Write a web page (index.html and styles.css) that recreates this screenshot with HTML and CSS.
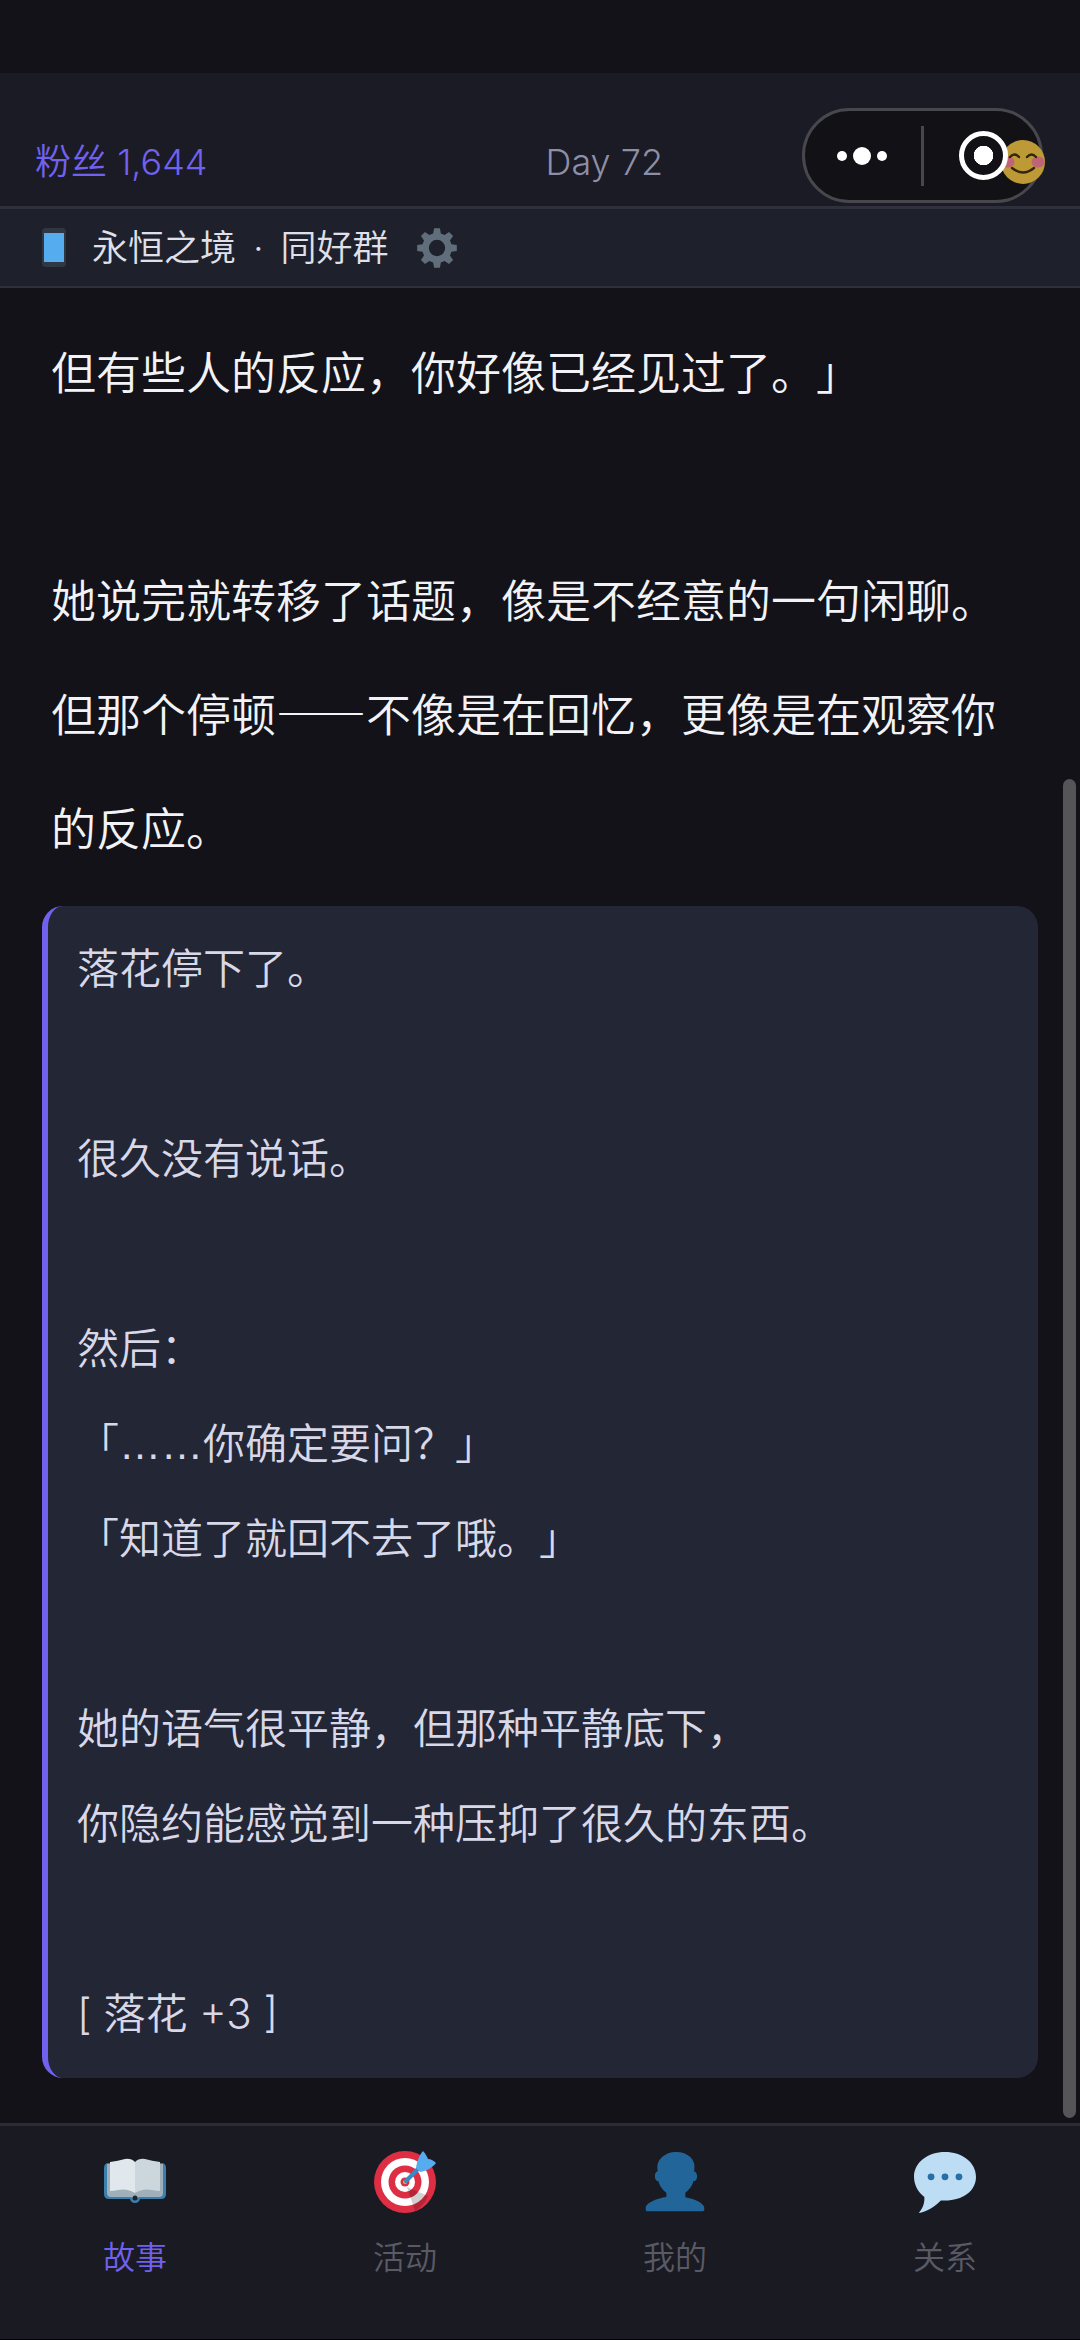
FILE: index.html
```html
<!DOCTYPE html>
<html lang="zh-CN">
<head>
<meta charset="utf-8">
<title>永恒之境</title>
<link rel="stylesheet" href="styles.css">
</head>
<body>
<div class="page">
  <div class="status"></div>
  <header class="top">
    <span class="fans">粉丝 1,644</span>
    <span class="day">Day 72</span>
    <svg class="smiley" viewBox="0 0 44 44" width="44" height="44">
      <circle cx="22" cy="22" r="22" fill="#bd9a35"/>
      <ellipse cx="7" cy="22" rx="6.500" ry="5.500" fill="#bf6477"/>
      <ellipse cx="37" cy="22" rx="6.500" ry="5.500" fill="#bf6477"/>
      <path d="M9 17q4.500-5 9 0M26 17q4.500-5 9 0M11 28q11 9 22 0" fill="none" stroke="#33260e" stroke-width="2.400" stroke-linecap="round"/>
    </svg>
  </header>
  <div class="sub">
    <svg class="phone" viewBox="0 0 24 39" width="24" height="39">
      <rect width="24" height="39" rx="4" fill="#2f3742"/>
      <rect x="2" y="5" width="20" height="29" fill="#55acee"/>
    </svg>
    <span class="sub-title">永恒之境 · 同好群</span>
    <svg class="gear" viewBox="0 0 36 36" width="42" height="42">
      <path fill="#5f6e7a" fill-rule="evenodd" d="M15.500 1h5l.8 4.600 3.200 1.300 3.800-2.700 3.500 3.500-2.700 3.800 1.300 3.200 4.600.8v5l-4.600.8-1.300 3.200 2.700 3.800-3.500 3.500-3.800-2.700-3.200 1.300-.8 4.600h-5l-.8-4.600-3.200-1.300-3.800 2.700-3.500-3.500 2.700-3.800-1.300-3.200L1 20.500v-5l4.600-.8 1.300-3.200-2.700-3.800 3.500-3.500 3.800 2.700 3.200-1.300zM18 11a7 7 0 1 0 0 14 7 7 0 0 0 0-14z"/>
    </svg>
  </div>
  <main class="content">
    <p class="line">但有些人的反应，你好像已经见过了。」</p>
    <p class="line">&nbsp;</p>
    <p class="line">她说完就转移了话题，像是不经意的一句闲聊。</p>
    <p class="line">但那个停顿<span class="cjk">——</span>不像是在回忆，更像是在观察你</p>
    <p class="line">的反应。</p>
    <section class="card">
      <p>落花停下了。</p>
      <p>&nbsp;</p>
      <p>很久没有说话。</p>
      <p>&nbsp;</p>
      <p>然后：</p>
      <p>「<span class="low">……</span>你确定要问？」</p>
      <p>「知道了就回不去了哦。」</p>
      <p>&nbsp;</p>
      <p>她的语气很平静，但那种平静底下，</p>
      <p>你隐约能感觉到一种压抑了很久的东西。</p>
      <p>&nbsp;</p>
      <p>[ 落花 +3 ]</p>
    </section>
  </main>
  <nav class="tabs">
    <div class="tab active">
      <svg class="tab-icon" viewBox="0 0 62 62" width="62" height="62">
        <path fill="#3b7fad" d="M5 12h52q5 0 5 5v26q0 5-5 5H36q-1 4-5 4t-5-4H5q-5 0-5-5V17q0-5 5-5z"/>
        <path fill="#9fb0ba" d="M3 13h56v29q0 4-4 4H35l-4 2-4-2H7q-4 0-4-4z"/>
        <path fill="#e1e8ed" d="M6 11q8-1 15-3 6-1 10 3v31q-8-5-17-3-4 1-8 1z"/>
        <path fill="#ccd6dd" d="M56 11q-8-1-15-3-6-1-10 3v31q8-5 17-3 4 1 8 1z"/>
        <circle cx="31" cy="47" r="2.500" fill="#1c2530"/>
      </svg>
      <span class="tab-label">故事</span>
    </div>
    <div class="tab">
      <svg class="tab-icon" viewBox="0 0 62 62" width="62" height="62">
        <circle cx="31" cy="31" r="31" fill="#dd2e44"/>
        <circle cx="31" cy="31" r="24" fill="#fff"/>
        <circle cx="31" cy="31" r="16.500" fill="#dd2e44"/>
        <circle cx="31" cy="31" r="10" fill="#fff"/>
        <circle cx="31" cy="31" r="4.500" fill="#dd2e44"/>
        <circle cx="31" cy="31" r="2" fill="#ffac33"/>
        <path fill="#000" opacity=".18" d="M33 36l21 9a31 31 0 0 1-13 15z"/>
        <path stroke="#3b88c3" stroke-width="4" stroke-linecap="round" d="M32 30L48 14"/>
        <path fill="#55acee" d="M42 17C43 10 46 3 49 0c3 3 4 6 5 8 3 0 6 2 8 4-3 4-9 8-16 9z"/>
      </svg>
      <span class="tab-label">活动</span>
    </div>
    <div class="tab">
      <svg class="tab-icon" viewBox="0 0 36 36" width="62" height="62">
        <path fill="#269" d="M24 26.800v-2.570c2-1.350 4.080-3.780 4.700-6.900.19.100.21.170.41.170.99 0 1.710-1.290 1.710-2.870 0-1.560-.82-2.830-1.790-2.870.19-.67.290-1.580.290-2.730C29.320 5.170 26 .530 18.540.530c-6.630 0-10.780 4.640-10.780 8.500 0 1.120.070 2.040.19 2.760-.91.130-1.630 1.350-1.630 2.840 0 1.590.80 2.870 1.800 2.870.2 0 .02-.07.2-.17C8.950 20.450 11 22.880 13 24.230v2.420c-5 .64-12 3.430-12 6.230v1.060C1 35 1.500 35 2.500 35h31c1 0 1.500 0 1.500-1.060v-1.060c0-2.620-6-5.230-11-6.080z"/>
      </svg>
      <span class="tab-label">我的</span>
    </div>
    <div class="tab">
      <svg class="tab-icon" viewBox="0 0 60 60" width="62" height="62">
        <path fill="#bdddf4" d="M30 1c16.500 0 30 10 30 24S47 48 30 48c-1.500 0-3 0-4-.2C20 54 12 59 4.500 60c3.500-4 6-9 5.500-15.500C4 40 0 33 0 25 0 11 13.500 1 30 1z"/>
        <circle cx="16.500" cy="25" r="3.300" fill="#2a6ea6"/>
        <circle cx="30" cy="25" r="3.300" fill="#2a6ea6"/>
        <circle cx="43.500" cy="25" r="3.300" fill="#2a6ea6"/>
      </svg>
      <span class="tab-label">关系</span>
    </div>
  </nav>
  <div class="capsule">
    <div class="capsule-left">
      <i class="dot"></i><i class="dot big"></i><i class="dot"></i>
    </div>
    <div class="capsule-div"></div>
    <div class="capsule-right"><i class="target"></i></div>
  </div>
  <div class="scrollbar"></div>
</div>
</body>
</html>
```

FILE: styles.css
```css
* { box-sizing: border-box; margin: 0; padding: 0; }
html, body { width: 1080px; height: 2340px; background: #000; overflow: hidden; }
body { font-family: Inter, "Noto Sans CJK SC", sans-serif; font-weight: 350; text-spacing-trim: space-all; }
.page { position: relative; width: 1080px; height: 2339px; display: flex; flex-direction: column; background: #121218; overflow: hidden; }
.status { height: 73px; flex: none; background: #121218; }
.top { height: 136px; flex: none; display: flex; justify-content: space-between; align-items: center; padding: 45px 35px 0; background: #1a1b24; border-bottom: 3px solid #2f303b; font-size: 36px; line-height: 50px; }
.fans { color: #7161ef; }
.day { color: #8e8ea6; }
.smiley { display: block; position: relative; z-index: 1; }
.sub { height: 79px; flex: none; display: flex; align-items: center; padding-left: 42px; background: #1e212b; border-bottom: 2px solid #2f303b; }
.phone { flex: none; }
.sub-title { margin-left: 26px; font-size: 36px; line-height: 50px; word-spacing: 7px; color: #e0e0ea; white-space: nowrap; }
.gear { flex: none; margin-left: 28px; }
.content { flex: 1; min-height: 0; padding: 29px 28px 0 42px; background: #121218; overflow: hidden; }
.line { padding-left: 9px; font-size: 45px; line-height: 114px; color: #f2f2f7; white-space: nowrap; }
.cjk { font-family: "Noto Sans CJK SC", sans-serif; font-weight: 500; line-height: 1; }
.low { font-family: "Liberation Sans", sans-serif; line-height: 1; }
.card { margin-top: 19px; height: 1172px; width: 996px; padding: 15px 29px 17px; background: #232635; border-left: 6px solid #7161ef; border-radius: 21px; font-size: 42px; line-height: 95px; color: #d8d8e8; white-space: nowrap; }
.tabs { height: 216px; flex: none; display: grid; grid-template-columns: repeat(4, 1fr); background: #191a22; border-top: 3px solid #2c2c36; }
.tab { display: flex; flex-direction: column; align-items: center; padding-top: 25px; color: #5a5a66; }
.tab.active { color: #7161ef; }
.tab-icon { display: block; flex: none; }
.tab-label { margin-top: 20px; font-size: 32px; line-height: 50px; }
.capsule { position: absolute; left: 802px; top: 108px; width: 241px; height: 95px; display: flex; align-items: center; border: 3px solid #47474d; border-radius: 48px; background: #111116; }
.capsule-left { display: flex; align-items: center; justify-content: center; gap: 6px; width: 116px; padding-right: 3px; flex: none; }
.dot { display: block; width: 10px; height: 10px; border-radius: 50%; background: #fff; }
.dot.big { width: 18px; height: 18px; }
.capsule-div { width: 3px; height: 60px; background: #47474d; flex: none; }
.capsule-right { flex: 1; display: flex; align-items: center; justify-content: center; padding-left: 3px; }
.target { display: block; position: relative; z-index: 2; width: 49px; height: 49px; border: 5px solid #fff; border-radius: 50%; background: radial-gradient(circle, #fff 0 9.500px, #111116 10px); }
.scrollbar { position: absolute; left: 1063px; top: 779px; width: 13px; height: 1339px; border-radius: 7px; background: #555558; }
```
